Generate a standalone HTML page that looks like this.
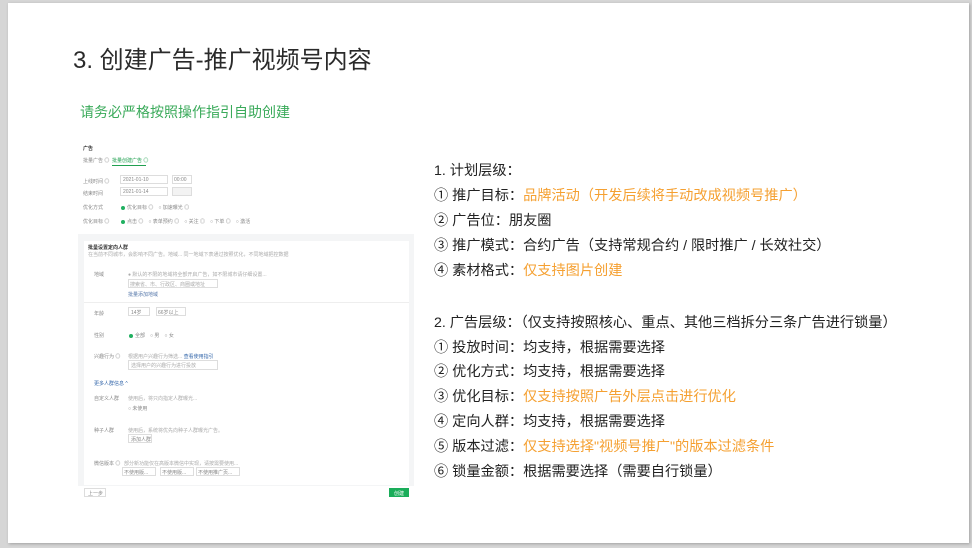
<!DOCTYPE html>
<html><head><meta charset="utf-8"><style>
*{margin:0;padding:0;box-sizing:border-box}
body{width:972px;height:548px;background:#d6d6d6;position:relative;overflow:hidden;font-family:"Liberation Sans","Noto Sans CJK SC",sans-serif}
.slide{position:absolute;left:8px;top:3px;width:961px;height:540px;background:#fff;box-shadow:1px 1px 3px rgba(0,0,0,.25)}
.t{position:absolute;white-space:nowrap}
.title{left:73px;top:40px;font-size:24px;color:#2a2a2a}
.sub{left:80px;top:102px;font-size:14px;color:#3aaa5a}
.r{left:434px;font-size:14.2px;color:#222;line-height:18px}
.o{color:#f5a031}
.s{position:absolute;font-size:5px;color:#888;white-space:nowrap}
.box{position:absolute;border:1px solid #ddd;background:#fff}
.dot{position:absolute;width:4px;height:4px;border-radius:50%;background:#20b060}
</style></head><body>
<div class="slide"></div>
<div class="t title">3. 创建广告-推广视频号内容</div>
<div class="t sub">请务必严格按照操作指引自助创建</div>

<div style="position:absolute;left:78px;top:140px;width:336px;height:362px;background:#fff">
  <div class="s" style="left:5px;top:5px;color:#333;font-weight:bold">广告</div>
  <div class="s" style="left:5px;top:17px">批量广告 ◎</div>
  <div class="s" style="left:34px;top:17px;color:#20a050">批量创建广告 ◎</div>
  <div style="position:absolute;left:34px;top:25px;width:34px;height:1px;background:#20a050"></div>
  <div class="s" style="left:5px;top:38px">上线时间 ◎</div>
  <div class="box" style="left:42px;top:35px;width:48px;height:9px"></div><div class="s" style="left:45px;top:37px">2021-01-10</div>
  <div class="box" style="left:94px;top:35px;width:20px;height:9px"></div><div class="s" style="left:96px;top:37px">00:00</div>
  <div class="s" style="left:5px;top:50px">结束时间</div>
  <div class="box" style="left:42px;top:47px;width:48px;height:9px"></div><div class="s" style="left:45px;top:49px">2021-01-14</div>
  <div class="box" style="left:94px;top:47px;width:20px;height:9px;background:#f3f3f3"></div>
  <div class="s" style="left:5px;top:64px">优化方式</div>
  <div class="dot" style="left:43px;top:66px"></div><div class="s" style="left:49px;top:64px">优化目标 ◎　○ 加速曝光 ◎</div>
  <div class="s" style="left:5px;top:78px">优化目标 ◎</div>
  <div class="dot" style="left:43px;top:80px"></div><div class="s" style="left:49px;top:78px">点击 ◎　○ 表单预约 ◎　○ 关注 ◎　○ 下单 ◎　○ 激活</div>
  <div style="position:absolute;left:0;top:94px;width:336px;height:268px;background:#f4f5f6"></div>
  <div style="position:absolute;left:6px;top:101px;width:325px;height:244px;background:#fff"></div>
  <div class="s" style="left:10px;top:104px;color:#333;font-weight:bold">批量设置定向人群</div>
  <div class="s" style="left:10px;top:111px;color:#aaa">在当前不同城市，会影响不同广告。地域... 同一地域下表通过按照优化，不同地域把控数据</div>
  <div class="s" style="left:16px;top:131px">地域</div>
  <div class="s" style="left:50px;top:131px;color:#aaa">● 默认的不限的地域将全部开启广告，如不限城市请仔细设置...</div>
  <div class="box" style="left:50px;top:139px;width:90px;height:9px"></div>
  <div class="s" style="left:52px;top:141px;color:#aaa">搜索省、市、行政区、商圈或地址</div>
  <div class="s" style="left:50px;top:151px;color:#5577aa">批量添加地域</div>
  <div style="position:absolute;left:6px;top:162px;width:325px;height:1px;background:#eee"></div>
  <div class="s" style="left:16px;top:170px">年龄</div>
  <div class="box" style="left:50px;top:167px;width:22px;height:9px"></div><div class="s" style="left:53px;top:169px">14岁</div>
  <div class="box" style="left:78px;top:167px;width:30px;height:9px"></div><div class="s" style="left:80px;top:169px">66岁以上</div>
  <div class="s" style="left:16px;top:192px">性别</div>
  <div class="dot" style="left:51px;top:194px"></div><div class="s" style="left:57px;top:192px">全部　○ 男　○ 女</div>
  <div class="s" style="left:16px;top:213px">兴趣行为 ◎</div>
  <div class="s" style="left:50px;top:213px;color:#aaa">根据用户兴趣行为筛选... <span style="color:#3366aa">查看使用指引</span></div>
  <div class="box" style="left:50px;top:220px;width:90px;height:10px"></div>
  <div class="s" style="left:53px;top:222px;color:#aaa">选择用户的兴趣行为进行投放</div>
  <div class="s" style="left:16px;top:240px;color:#3366aa">更多人群信息 ^</div>
  <div class="s" style="left:16px;top:255px">自定义人群</div>
  <div class="s" style="left:50px;top:255px;color:#aaa">使用后，将只向指定人群曝光...</div>
  <div class="s" style="left:50px;top:265px">○ 未使用</div>
  <div class="s" style="left:16px;top:287px">种子人群</div>
  <div class="s" style="left:50px;top:287px;color:#aaa">使用后，系统将优先向种子人群曝光广告。</div>
  <div class="box" style="left:50px;top:294px;width:24px;height:9px"></div><div class="s" style="left:53px;top:296px">添加人群</div>
  <div class="s" style="left:16px;top:320px">微信版本 ◎</div>
  <div class="s" style="left:46px;top:320px;color:#aaa">部分新功能仅在高版本微信中实现，请按需要使用...</div>
  <div class="box" style="left:44px;top:327px;width:34px;height:9px"></div><div class="s" style="left:46px;top:329px">不使用版...</div>
  <div class="box" style="left:82px;top:327px;width:34px;height:9px"></div><div class="s" style="left:84px;top:329px">不使用版...</div>
  <div class="box" style="left:118px;top:327px;width:44px;height:9px"></div><div class="s" style="left:120px;top:329px">不使用推广页...</div>
  <div style="position:absolute;left:0;top:346px;width:336px;height:16px;background:#fff"></div>
  <div class="box" style="left:6px;top:348px;width:22px;height:9px"></div><div class="s" style="left:10px;top:350px">上一步</div>
  <div style="position:absolute;left:311px;top:348px;width:20px;height:9px;background:#1aad5a"></div><div class="s" style="left:316px;top:350px;color:#fff">创建</div>
</div>

<div class="t r" style="top:162px">1. 计划层级：</div>
<div class="t r" style="top:187px">① 推广目标：<span class="o">品牌活动（开发后续将手动改成视频号推广）</span></div>
<div class="t r" style="top:212px">② 广告位：朋友圈</div>
<div class="t r" style="top:237px">③ 推广模式：合约广告（支持常规合约 / 限时推广 / 长效社交）</div>
<div class="t r" style="top:262px">④ 素材格式：<span class="o">仅支持图片创建</span></div>
<div class="t r" style="top:314px">2. 广告层级：（仅支持按照核心、重点、其他三档拆分三条广告进行锁量）</div>
<div class="t r" style="top:339px">① 投放时间：均支持，根据需要选择</div>
<div class="t r" style="top:363px">② 优化方式：均支持，根据需要选择</div>
<div class="t r" style="top:388px">③ 优化目标：<span class="o">仅支持按照广告外层点击进行优化</span></div>
<div class="t r" style="top:413px">④ 定向人群：均支持，根据需要选择</div>
<div class="t r" style="top:438px">⑤ 版本过滤：<span class="o">仅支持选择"视频号推广"的版本过滤条件</span></div>
<div class="t r" style="top:463px">⑥ 锁量金额：根据需要选择（需要自行锁量）</div>
</body></html>
